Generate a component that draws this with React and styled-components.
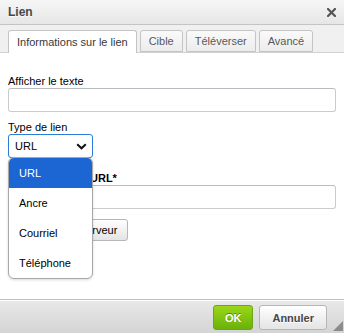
import React from 'react';
import styled, { createGlobalStyle } from 'styled-components';

const Global = createGlobalStyle`
  * { box-sizing: border-box; }
  html, body { margin: 0; padding: 0; width: 344px; height: 333px; overflow: hidden; }
  body { font-family: 'Liberation Sans', Arial, sans-serif; font-size: 11px; color: #000; background: #fff; }
`;

const Dialog = styled.div`
  position: relative;
  width: 344px;
  height: 333px;
  display: flex;
  flex-direction: column;
  background: #fff;
`;

const TitleBar = styled.div`
  height: 25px;
  flex: none;
  display: flex;
  align-items: center;
  justify-content: space-between;
  padding: 0 8px 1px 8px;
  border-bottom: 1px solid #c4c4c4;
  background: linear-gradient(#f6f6f6, #e6e6e6);
  font-size: 12px;
  font-weight: bold;
  color: #474747;
  text-shadow: 0 1px 0 rgba(255,255,255,0.75);
`;

const Close = styled.svg`
  width: 9px;
  height: 9px;
  margin-top: 1px;
`;

const TabBar = styled.div`
  height: 28px;
  flex: none;
  display: flex;
  align-items: flex-end;
  gap: 3px;
  padding: 0 8px;
  background: #f0f0f0;
  border-bottom: 1px solid #d1d1d1;
`;

const Tab = styled.div`
  height: ${p => (p.$active ? '23px' : '22px')};
  margin-bottom: ${p => (p.$active ? '-1px' : '0')};
  padding: 0 8px;
  display: flex;
  align-items: center;
  border: 1px solid #c4c4c4;
  border-bottom: ${p => (p.$active ? 'none' : '1px solid #c4c4c4')};
  border-radius: 3px 3px 0 0;
  background: ${p => (p.$active ? '#fff' : 'linear-gradient(#fafafa, #ececec)')};
  color: ${p => (p.$active ? '#383838' : '#595959')};
  font-size: 11px;
  padding-bottom: ${p => (p.$active ? '1px' : '0')};
`;

const Body = styled.div`
  flex: 1;
  padding: 22px 8px 0 8px;
  display: flex;
  flex-direction: column;
`;

const Field = styled.div`
  margin-top: ${p => p.$top || 0}px;
  display: flex;
  flex-direction: column;
  width: ${p => p.$width || 'auto'};
  flex: ${p => (p.$grow ? 1 : 'none')};
`;

const Label = styled.label`
  line-height: 12px;
  height: 12px;
  margin-bottom: 1px;
  font-size: 11px;
  font-weight: ${p => (p.$required ? 'bold' : 'normal')};
  white-space: nowrap;
`;

const TextInput = styled.div`
  height: 24px;
  background: #fff;
  border: 1px solid #c9cccf;
  border-top-color: #b8bcc1;
  border-radius: 3px;
`;

const Select = styled.div`
  width: 85px;
  height: 24px;
  display: flex;
  align-items: center;
  justify-content: space-between;
  padding: 0 5px 0 6px;
  border: 1px solid #2b7bd9;
  border-radius: 3px;
  font-size: 11px;
  background: #fff;
`;

const Row = styled.div`
  margin-top: ${p => p.$top || 0}px;
  display: flex;
  gap: 6px;
`;

const Browse = styled.div`
  margin-top: 10px;
  align-self: flex-start;
  height: 22px;
  display: flex;
  align-items: center;
  padding: 0 10px 0 16px;
  border: 1px solid #b6b6b6;
  border-radius: 3px;
  background: linear-gradient(#fff, #e4e4e4);
  color: #000;
  font-size: 11px;
`;

const Footer = styled.div`
  position: relative;
  height: 34px;
  flex: none;
  display: flex;
  justify-content: flex-end;
  align-items: flex-start;
  gap: 6px;
  padding: 5px 17px 0 0;
  border-top: 1px solid #c2c2c2;
  box-shadow: inset 0 1px 0 #fff;
  background: linear-gradient(#e9e9e9, #d3d4d3);
`;

const Button = styled.div`
  height: 25px;
  display: flex;
  align-items: center;
  padding: 0 ${p => (p.$ok ? 11 : 12)}px;
  border-radius: 3px;
  font-size: 11px;
  font-weight: bold;
  border: 1px solid ${p => (p.$ok ? '#6ba712' : '#b6b6b6')};
  background: ${p => (p.$ok ? 'linear-gradient(#9ad717, #69b10b)' : 'linear-gradient(#fff, #e4e4e4)')};
  color: ${p => (p.$ok ? '#fff' : '#474747')};
  text-shadow: ${p => (p.$ok ? '0 -1px 0 #55830c' : '0 1px 0 #fff')};
`;

const Resize = styled.div`
  position: absolute;
  right: 1px;
  bottom: 2px;
  width: 0;
  height: 0;
  border-style: solid;
  border-width: 0 0 10px 10px;
  border-color: transparent transparent #8c8c8c transparent;
`;

const Menu = styled.div`
  position: absolute;
  left: 8px;
  top: 157px;
  width: 85px;
  height: 122px;
  background: #fff;
  border: 1px solid #a8a8a8;
  border-radius: 6px;
  overflow: hidden;
  box-shadow: 0 1px 3px rgba(0,0,0,0.15);
`;

const MenuItem = styled.div`
  height: 30px;
  display: flex;
  align-items: center;
  padding-left: 10px;
  font-size: 11px;
  background: ${p => (p.$selected ? '#1b66d3' : 'transparent')};
  color: ${p => (p.$selected ? '#fff' : '#000')};
`;

const options = ['URL', 'Ancre', 'Courriel', 'Téléphone'];

export default function App() {
  return (
    <Dialog>
      <Global />
      <TitleBar>
        <span>Lien</span>
        <Close viewBox="0 0 9 9">
          <path d="M1 1 L8 8 M8 1 L1 8" stroke="#555" strokeWidth="2.2" strokeLinecap="square" />
        </Close>
      </TitleBar>
      <TabBar>
        <Tab $active>Informations sur le lien</Tab>
        <Tab>Cible</Tab>
        <Tab>Téléverser</Tab>
        <Tab>Avancé</Tab>
      </TabBar>
      <Body>
        <Field>
          <Label>Afficher le texte</Label>
          <TextInput />
        </Field>
        <Field $top={9}>
          <Label>Type de lien</Label>
          <Select>
            <span>URL</span>
            <svg width="11" height="7" viewBox="0 0 11 7">
              <path d="M1.2 1.2 L5.5 5.3 L9.8 1.2" fill="none" stroke="#111" strokeWidth="2" />
            </svg>
          </Select>
        </Field>
        <Row $top={14}>
          {/* protocol column, hidden under the open list */}
          <Field $width="76px">
            <Label />
            <TextInput />
          </Field>
          <Field $grow>
            <Label $required>URL*</Label>
            <TextInput />
          </Field>
        </Row>
        <Browse>Explorer le serveur</Browse>
      </Body>
      <Footer>
        <Button $ok>OK</Button>
        <Button>Annuler</Button>
        <Resize />
      </Footer>
      <Menu>
        {options.map((o, i) => (
          <MenuItem key={o} $selected={i === 0}>{o}</MenuItem>
        ))}
      </Menu>
    </Dialog>
  );
}
